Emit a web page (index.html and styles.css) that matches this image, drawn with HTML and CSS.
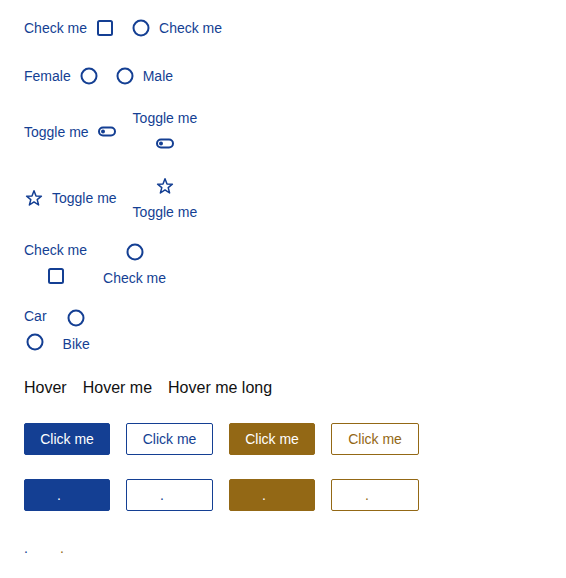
FILE: index.html
```html
<!DOCTYPE html>
<html>
<head>
<meta charset="utf-8">
<link rel="stylesheet" href="styles.css">
</head>
<body>
<div class="page">
  <div class="row r1">
    <label class="group"><span>Check me</span>
      <svg class="ic" viewBox="0 0 20 20"><rect x="3" y="3" width="14" height="14" rx="1.5" fill="none" stroke="currentColor" stroke-width="2"/></svg>
    </label>
    <label class="group">
      <svg class="ic" viewBox="0 0 20 20"><circle cx="10" cy="10" r="7.5" fill="none" stroke="currentColor" stroke-width="2"/></svg>
      <span>Check me</span>
    </label>
  </div>

  <div class="row r2">
    <label class="group"><span>Female</span>
      <svg class="ic" viewBox="0 0 20 20"><circle cx="10" cy="10" r="7.5" fill="none" stroke="currentColor" stroke-width="2"/></svg>
    </label>
    <label class="group">
      <svg class="ic" viewBox="0 0 20 20"><circle cx="10" cy="10" r="7.5" fill="none" stroke="currentColor" stroke-width="2"/></svg>
      <span>Male</span>
    </label>
  </div>

  <div class="row r3">
    <label class="group"><span>Toggle me</span>
      <svg class="ic" viewBox="0 0 20 20"><rect x="2" y="5.5" width="16" height="8" rx="4" fill="none" stroke="currentColor" stroke-width="2"/><circle cx="6" cy="9.5" r="2" fill="currentColor"/></svg>
    </label>
    <label class="group col"><span>Toggle me</span>
      <svg class="ic" viewBox="0 0 20 20"><rect x="2" y="5.5" width="16" height="8" rx="4" fill="none" stroke="currentColor" stroke-width="2"/><circle cx="6" cy="9.5" r="2" fill="currentColor"/></svg>
    </label>
  </div>

  <div class="row r4">
    <label class="group">
      <svg class="ic" viewBox="0 0 20 20"><path d="M10 2.8 L12 8 L17.4 8.2 L13.2 11.6 L14.6 17 L10 13.9 L5.4 17 L6.8 11.6 L2.6 8.2 L8 8 Z" fill="none" stroke="currentColor" stroke-width="1.5" stroke-linejoin="round"/></svg>
      <span>Toggle me</span>
    </label>
    <label class="group col">
      <svg class="ic" viewBox="0 0 20 20"><path d="M10 2.8 L12 8 L17.4 8.2 L13.2 11.6 L14.6 17 L10 13.9 L5.4 17 L6.8 11.6 L2.6 8.2 L8 8 Z" fill="none" stroke="currentColor" stroke-width="1.5" stroke-linejoin="round"/></svg>
      <span>Toggle me</span>
    </label>
  </div>

  <div class="row r5">
    <label class="group col"><span>Check me</span>
      <svg class="ic" viewBox="0 0 20 20"><rect x="3" y="3" width="14" height="14" rx="1.5" fill="none" stroke="currentColor" stroke-width="2"/></svg>
    </label>
    <label class="group col">
      <svg class="ic" viewBox="0 0 20 20"><circle cx="10" cy="10" r="7.5" fill="none" stroke="currentColor" stroke-width="2"/></svg>
      <span>Check me</span>
    </label>
  </div>

  <div class="row r6">
    <label class="group col"><span>Car</span>
      <svg class="ic" viewBox="0 0 20 20"><circle cx="10" cy="10" r="7.5" fill="none" stroke="currentColor" stroke-width="2"/></svg>
    </label>
    <label class="group col">
      <svg class="ic" viewBox="0 0 20 20"><circle cx="10" cy="10" r="7.5" fill="none" stroke="currentColor" stroke-width="2"/></svg>
      <span>Bike</span>
    </label>
  </div>

  <div class="row hover">
    <span>Hover</span>
    <span>Hover me</span>
    <span>Hover me long</span>
  </div>

  <div class="row btns">
    <button class="btn w86 blue">Click me</button>
    <button class="btn w87 blue-o">Click me</button>
    <button class="btn w86 brown">Click me</button>
    <button class="btn w88 brown-o">Click me</button>
  </div>

  <div class="row btns2">
    <button class="btn w86 dotbtn blue">.</button>
    <button class="btn w87 dotbtn blue-o">.</button>
    <button class="btn w86 dotbtn brown">.</button>
    <button class="btn w88 dotbtn brown-o">.</button>
  </div>

  <div class="row dots">
    <span class="dot-blue">.</span>
    <span class="dot-brown">.</span>
  </div>
</div>
</body>
</html>
```
FILE: styles.css
```css
html, body {
  margin: 0;
  padding: 0;
  background: #ffffff;
}
body {
  font-family: "Liberation Sans", Arial, sans-serif;
  font-size: 14px;
  line-height: 16px;
  color: #143f93;
}
.page {
  padding: 18px 24px;
}
.row {
  display: flex;
  align-items: center;
  gap: 16px;
}
.group {
  display: flex;
  align-items: center;
  gap: 8px;
}
.group.col {
  flex-direction: column;
  gap: 8px;
}
.ic {
  width: 20px;
  height: 20px;
  display: block;
  flex: none;
}
.r2 { margin-top: 28px; }
.r3 { margin-top: 24px; }
.r4 { margin-top: 22px; }
.r5 { margin-top: 22px; }
.r6 { margin-top: 22px; }
.hover {
  margin-top: 27px;
  font-size: 16px;
  line-height: 18px;
  color: #111111;
}
.btns { margin-top: 26px; }
.btns2 { margin-top: 24px; }
.btn {
  box-sizing: border-box;
  font-family: "Liberation Sans", Arial, sans-serif;
  font-size: 14px;
  line-height: 16px;
  height: 32px;
  padding: 7px 0;
  border-radius: 2px;
  border: 1px solid;
  margin: 0;
  text-align: center;
  cursor: pointer;
}
.w86 { width: 86px; }
.w87 { width: 87px; }
.w88 { width: 88px; }
.btn.dotbtn {
  text-align: left;
  padding-left: 32px;
}
.btn.dotbtn.w87, .btn.dotbtn.w88 { padding-left: 33px; }
.blue { background: #143f93; border-color: #143f93; color: #ffffff; }
.blue-o { background: #ffffff; border-color: #143f93; color: #143f93; }
.brown { background: #936815; border-color: #936815; color: #ffffff; }
.brown-o { background: #ffffff; border-color: #936815; color: #936815; }
.dots {
  margin-top: 29px;
  gap: 32px;
}
.dot-blue { color: #143f93; }
.dot-brown { color: #936815; }
```
